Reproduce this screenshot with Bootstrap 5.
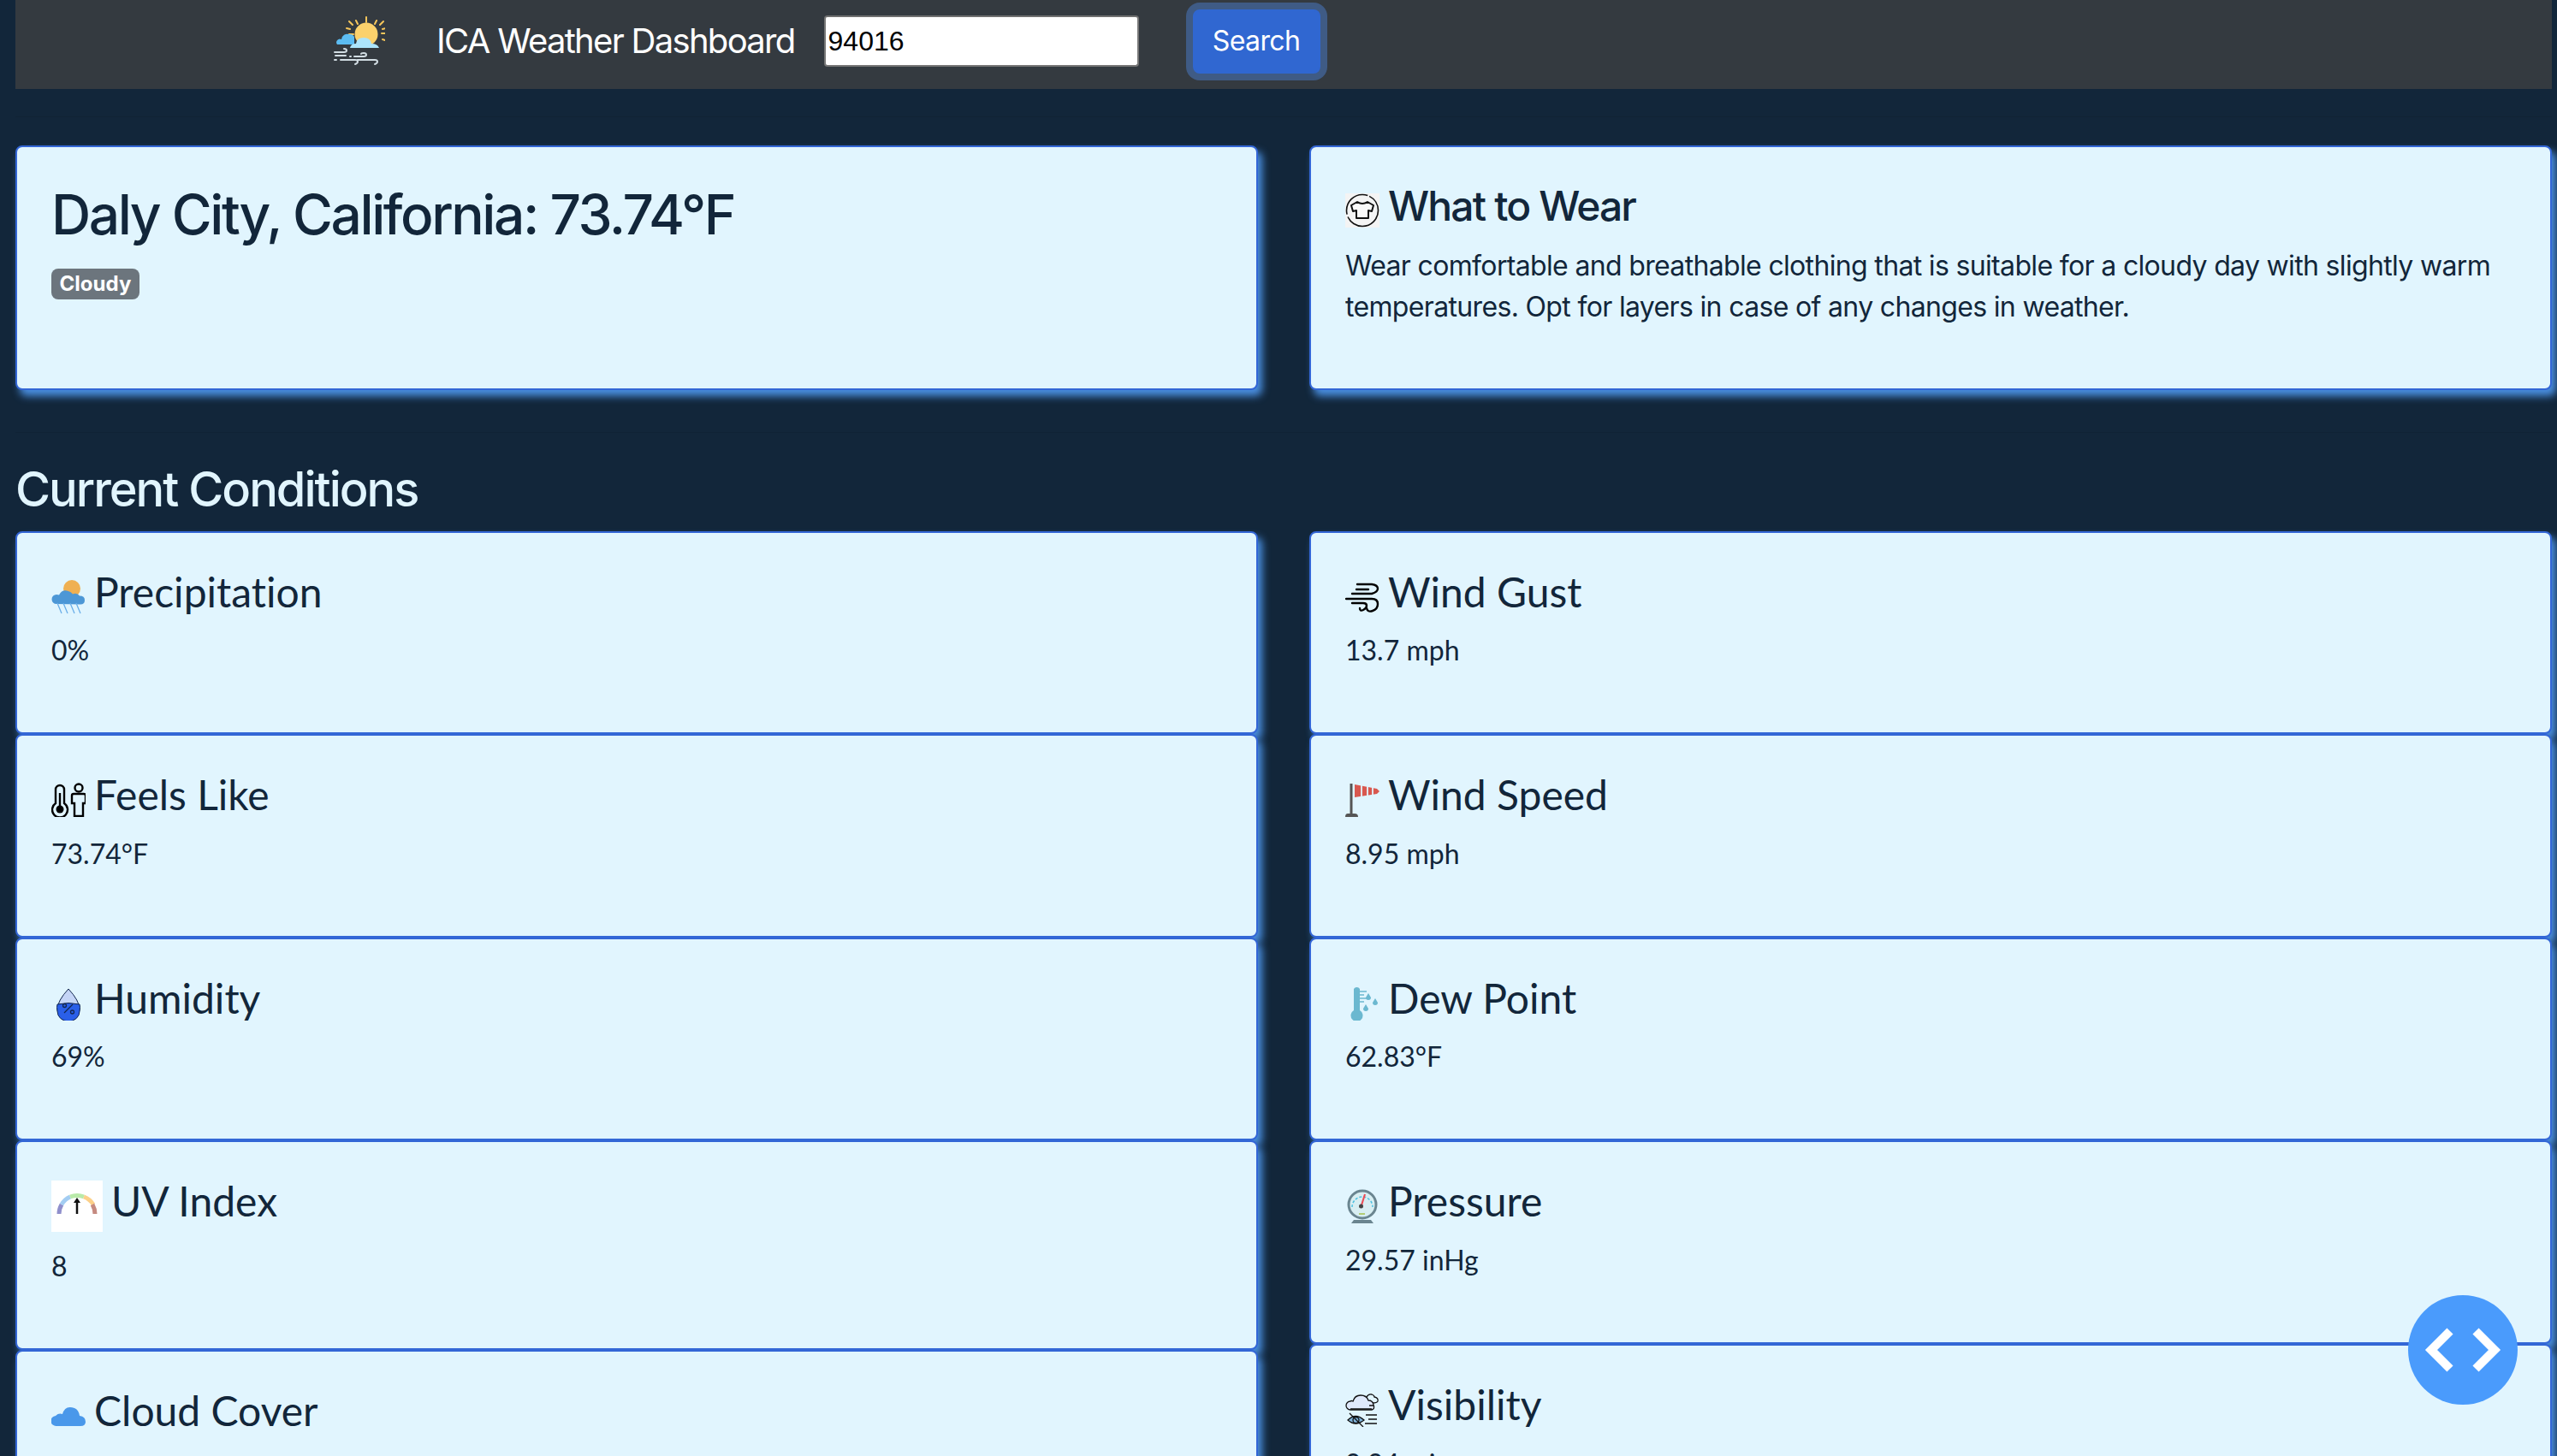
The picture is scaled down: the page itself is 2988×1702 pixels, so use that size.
<!DOCTYPE html>
<html lang="en">
<head>
<meta charset="utf-8">
<title>ICA Weather Dashboard</title>
<link href="https://cdn.jsdelivr.net/npm/bootstrap@5.3.0/dist/css/bootstrap.min.css" rel="stylesheet">
<style>
html{font-size:32px;overflow:hidden}
body{background:#12263a;color:#12263a;font-family:"Inter",sans-serif;height:1702px;overflow:hidden}
.page-shell{padding:0 6px 0 18px}
.top-bar{background:#343a40;height:104px;padding:0 0 8px 372px;justify-content:flex-start;flex-wrap:nowrap}
.logo-wrap{width:60px;height:60px;margin-right:60px;display:block}
.brand-name{color:#fff;font-size:40px;line-height:1.2;margin-right:34px;font-family:"Inter",sans-serif;letter-spacing:-1.7px}
.zip-input{width:368px;height:60px;font:32px/1 "Liberation Sans",sans-serif;color:#000;border:2px solid #767676;border-top-color:#6f6f6f;border-radius:4px;padding:2px 3px;background:#fff;margin-right:63px}
.search-btn{background:#3067d1;border:2px solid #3067d1;color:#fff;font-size:32px;letter-spacing:-.6px;width:149px;height:75px;padding:0;box-shadow:0 0 0 8px rgba(72,118,190,.55);border-radius:8px}
.soft-rule{border:0;border-top:1px solid rgba(0,0,0,.07);opacity:1}
.rule-top{margin:32px 0 33px}
.rule-mid{margin:49px 0 0}
.dash-row{--bs-gutter-x:60px;--bs-gutter-y:0}
.wx-card{background:#e1f5fe;border:2px solid #3366d6;border-radius:8px;box-shadow:5px 7px 10px #4a90e2;color:#12263a}
.wx-card .card-body{padding:40px}
.wx-title{font-size:48px;line-height:1.2;font-weight:500;margin-bottom:17px;letter-spacing:-1.85px}
.wx-value{font-size:32px;line-height:1.5;margin:0 0 31px;letter-spacing:-.66px}
.lato .wx-title{font-family:"Lato",sans-serif;font-weight:400;letter-spacing:0;margin-bottom:16px;font-variant-ligatures:none}
.lato .wx-value{font-family:"Lato",sans-serif;letter-spacing:0;margin-bottom:32px}
.city-title{font-size:64px;line-height:78px;font-weight:500;margin-bottom:15px;letter-spacing:-2.45px}
.sky-badge{background:#6c757d;font-size:24px;padding:6px 9.6px;border-radius:8px;line-height:1;font-weight:700;font-family:"Inter",sans-serif}
.section-head{color:#e1f5fe;font-size:56px;line-height:1.2;font-weight:500;margin:0;padding-top:33px;height:115px;letter-spacing:-2px}
.ico{width:40px;height:40px;vertical-align:-8px;margin-right:10px;display:inline-block}
.ico-uv{width:60px;height:60px;vertical-align:-17.5px;background:#fff}
.ico-shirt{background:#f4f4f4}
.fab-code{position:fixed;left:2814px;top:1514px;width:128px;height:128px;border-radius:50%;background:#4a9bfc;border:0;padding:0;display:flex;align-items:center;justify-content:center}
</style>
</head>
<body>
<div class="page-shell">
  <nav class="navbar top-bar d-flex align-items-center">
    <svg class="logo-wrap" viewBox="0 0 60 60" aria-hidden="true">
      <g stroke="#f6c65b" stroke-width="2" stroke-linecap="round"><path d="M38 2v6M26 6l2 4M50 6l-2 4M18 7l4 4M58 7l-4 4M15 15l4 1M61 15l-4 1M18 22h5M60 21h-4M17 29l3-1M60 29l-3-1"/></g>
      <path d="M4 34h20v-9a6 6 0 0 0-6-3 7 7 0 0 0-9 6 4 4 0 0 0-5 6z" fill="#5cbcf2"/>
      <circle cx="38" cy="22" r="13.5" fill="#fbd16c"/>
      <path d="M19 38q1-5 7-5 1-7 9-7 8 0 9 7 7 0 9 5z" fill="#ace4fb"/>
      <g fill="none" stroke="#d2dde3" stroke-width="2" stroke-linecap="round"><path d="M1 43h11q3 0 3-2t-3-2M2 47h12"/><path d="M24 48h11q3 0 3-2t-3-2-3 1"/><path d="M1 52h2M8 52h17q3 0 3 2t-3 3M28 52h20q3 0 3 2t-3 3"/><path d="M19 48h1"/></g>
    </svg>
    <span class="brand-name">ICA Weather Dashboard</span>
    <input class="zip-input" type="text" value="94016" aria-label="ZIP code">
    <button class="btn search-btn" type="button">Search</button>
  </nav>

  <hr class="soft-rule rule-top">

  <div class="row dash-row">
    <div class="col-6">
      <div class="card wx-card h-100"><div class="card-body">
        <h2 class="city-title">Daly City, California: 73.74°F</h2>
        <span class="badge sky-badge">Cloudy</span>
      </div></div>
    </div>
    <div class="col-6">
      <div class="card wx-card h-100"><div class="card-body">
        <h4 class="wx-title">
          <svg class="ico ico-shirt" viewBox="0 0 40 40" aria-hidden="true"><circle cx="20" cy="20" r="18.5" fill="none" stroke="#111" stroke-width="1.6" stroke-dasharray="50 3 40 2"/><path d="M14 10l-7 4 2 7 4-1v9h14v-9l4 1 2-7-7-4q-6 4-12 0z" fill="#fafafa" stroke="#111" stroke-width="2" stroke-linejoin="round"/></svg>What to Wear</h4>
        <p class="wx-value">Wear comfortable and breathable clothing that is suitable for a cloudy day with slightly warm temperatures. Opt for layers in case of any changes in weather.</p>
      </div></div>
    </div>
  </div>

  <hr class="soft-rule rule-mid">
  <h3 class="section-head">Current Conditions</h3>

  <div class="row dash-row lato">
    <div class="col-6">
      <div class="card wx-card"><div class="card-body">
        <h4 class="wx-title"><svg class="ico" viewBox="0 0 40 40" aria-hidden="true"><circle cx="24" cy="10" r="10" fill="#efb052"/><path d="M6 28a5.500 5.500 0 0 1 0-11q2 0 3 .500 3-6 9-5 5 1 7 4 5-2 8 2 6 0 6 5t-5 5z" fill="#4c97d6"/><g stroke="#6aaee8" stroke-width="1.300"><path d="M7 27l5 12M14 27l5 12M22 27l5 12M29 27l5 12"/></g></svg>Precipitation</h4>
        <p class="wx-value">0%</p>
      </div></div>
      <div class="card wx-card"><div class="card-body">
        <h4 class="wx-title"><svg class="ico" viewBox="0 0 40 40" aria-hidden="true"><g fill="none" stroke="#000" stroke-width="2.400"><path d="M5 24V8a5 5 0 0 1 10 0v16a9 9 0 1 1-10 0z"/><circle cx="32" cy="6" r="4.500"/><path d="M24 24V15q0-2 2-2h12q2 0 2 2v9h-3v15H27V24z"/></g><circle cx="10" cy="31" r="4.500" fill="#000"/><path d="M10 30V12" stroke="#000" stroke-width="2.400"/></svg>Feels Like</h4>
        <p class="wx-value">73.74°F</p>
      </div></div>
      <div class="card wx-card"><div class="card-body">
        <h4 class="wx-title"><svg class="ico" viewBox="0 0 40 40" aria-hidden="true"><path d="M20 3q13 14 13 24a13 12 0 0 1-26 0Q7 17 20 3z" fill="#c4d4f6" stroke="#12264f" stroke-width="1"/><path d="M7 21q13-3 26 0 1 3 0 8a13 12 0 0 1-26 0q-1-5 0-8z" fill="#2a5fe8" stroke="#12264f" stroke-width="1"/><g fill="none" stroke="#12264f" stroke-width="1.300"><circle cx="15.500" cy="22.500" r="2"/><circle cx="24.500" cy="30" r="2"/><path d="M25 21L15 31"/></g></svg>Humidity</h4>
        <p class="wx-value">69%</p>
      </div></div>
      <div class="card wx-card"><div class="card-body">
        <h4 class="wx-title"><svg class="ico ico-uv" viewBox="0 0 60 60" aria-hidden="true"><g fill="none" stroke-width="5"><path d="M9 39a22 22 0 0 1 3-11" stroke="#8f8fcc"/><path d="M12 28a22 22 0 0 1 10-9" stroke="#a3cdf2"/><path d="M22 19a22 22 0 0 1 16 0" stroke="#b9eaa9"/><path d="M38 19a22 22 0 0 1 11 9" stroke="#fcd089"/><path d="M48 28a22 22 0 0 1 3 11" stroke="#c58a80"/></g><path d="M30 39V24" stroke="#111" stroke-width="2.500"/><path d="M30 20l4 6h-8z" fill="#111"/></svg>UV Index</h4>
        <p class="wx-value">8</p>
      </div></div>
      <div class="card wx-card"><div class="card-body">
        <h4 class="wx-title"><svg class="ico" viewBox="0 0 40 40" aria-hidden="true"><path d="M6 32a6 6 0 0 1-1-12 8 8 0 0 1 8-2q3-11 14-7 5 2 6 9 7 1 7 7 0 5-6 5z" fill="#4a98ea"/></svg>Cloud Cover</h4>
      </div></div>
    </div>
    <div class="col-6">
      <div class="card wx-card"><div class="card-body">
        <h4 class="wx-title"><svg class="ico" viewBox="0 0 40 40" aria-hidden="true"><g fill="none" stroke="#000" stroke-width="2.400" stroke-linecap="round"><path d="M14 5h17q7 1 7 5t-7 6H8"/><path d="M13 11h14"/><path d="M1 22h30q7 0 7 6t-6 8-7-3"/><path d="M8 27h13q4 0 4 3t-4 5-4-2"/></g></svg>Wind Gust</h4>
        <p class="wx-value">13.7 mph</p>
      </div></div>
      <div class="card wx-card"><div class="card-body">
        <h4 class="wx-title"><svg class="ico" viewBox="0 0 40 40" aria-hidden="true"><path d="M7 1v35" stroke="#555" stroke-width="3"/><path d="M0 40q0-4 3-4h8q4 0 4 4z" fill="#555"/><path d="M11 2l26 5 3 3-3 3-26 4z" fill="#d8584f"/><g stroke="#e1f5fe" stroke-width="1.800"><path d="M19 2v15M26 3v13M32 5v9"/></g></svg>Wind Speed</h4>
        <p class="wx-value">8.95 mph</p>
      </div></div>
      <div class="card wx-card"><div class="card-body">
        <h4 class="wx-title"><svg class="ico" viewBox="0 0 40 40" aria-hidden="true"><path d="M10 3a4 4 0 0 1 7 0l0 25a7 7 0 1 1-7 0z" fill="#6bb8d0"/><g stroke="#6bb8d0" stroke-width="1.500"><path d="M17 6h8M17 10h5M17 14h8M17 18h5"/></g><g fill="#6bb8d0"><path d="M27 8l3 5a3 3 0 1 1-6 0z"/><path d="M35 14l3 5a3 3 0 1 1-6 0z"/><path d="M24 21l3 5a3 3 0 1 1-6 0z"/></g></svg>Dew Point</h4>
        <p class="wx-value">62.83°F</p>
      </div></div>
      <div class="card wx-card"><div class="card-body">
        <h4 class="wx-title"><svg class="ico" viewBox="0 0 40 40" aria-hidden="true"><path d="M10 36h20l3 4H7z" fill="#6a8590"/><circle cx="20" cy="18" r="16" fill="#d8eef2" stroke="#6a8590" stroke-width="3"/><path d="M8 21a12 12 0 1 1 24 0" fill="none" stroke="#4ec0e0" stroke-width="1.500" stroke-dasharray="3 2"/><path d="M18 22l5-16" stroke="#ee4b54" stroke-width="2"/><circle cx="18.500" cy="20" r="2.500" fill="#444"/><path d="M16 29h7" stroke="#a6c04a" stroke-width="1.500"/></svg>Pressure</h4>
        <p class="wx-value">29.57 inHg</p>
      </div></div>
      <div class="card wx-card"><div class="card-body">
        <h4 class="wx-title"><svg class="ico" viewBox="0 0 40 40" aria-hidden="true"><path d="M6 20a5 5 0 0 1 0-10q1-1 3 0 2-7 9-7 7 0 9 6 5 0 6 5 2 5-2 6z" fill="#dfe9fb" stroke="#111" stroke-width="1.300"/><path d="M25 5q2-4 6-3 3 1 3 3 5 1 4 5-1 2-6 2M33 15h-5M31 19H6" fill="none" stroke="#111" stroke-width="1.300"/><path d="M3 32q9-9 19 0-10 8-19 0z" fill="#7fb4dc" stroke="#111" stroke-width="1.300"/><circle cx="12.500" cy="32" r="3.500" fill="none" stroke="#111" stroke-width="1.300"/><path d="M5 24l16 16M24 26h13M27 31h10M23 36h14" fill="none" stroke="#111" stroke-width="1.300"/></svg>Visibility</h4>
        <p class="wx-value">9.94 mi</p>
      </div></div>
    </div>
  </div>
</div>
<button class="fab-code" type="button" aria-label="View code">
  <svg width="128" height="128" viewBox="0 0 128 128" aria-hidden="true"><path d="M49 42L27 64l22 22M79 42l22 22-22 22" fill="none" stroke="#fff" stroke-width="10"/></svg>
</button>
<script src="https://cdn.jsdelivr.net/npm/bootstrap@5.3.0/dist/js/bootstrap.bundle.min.js"></script>
</body>
</html>
